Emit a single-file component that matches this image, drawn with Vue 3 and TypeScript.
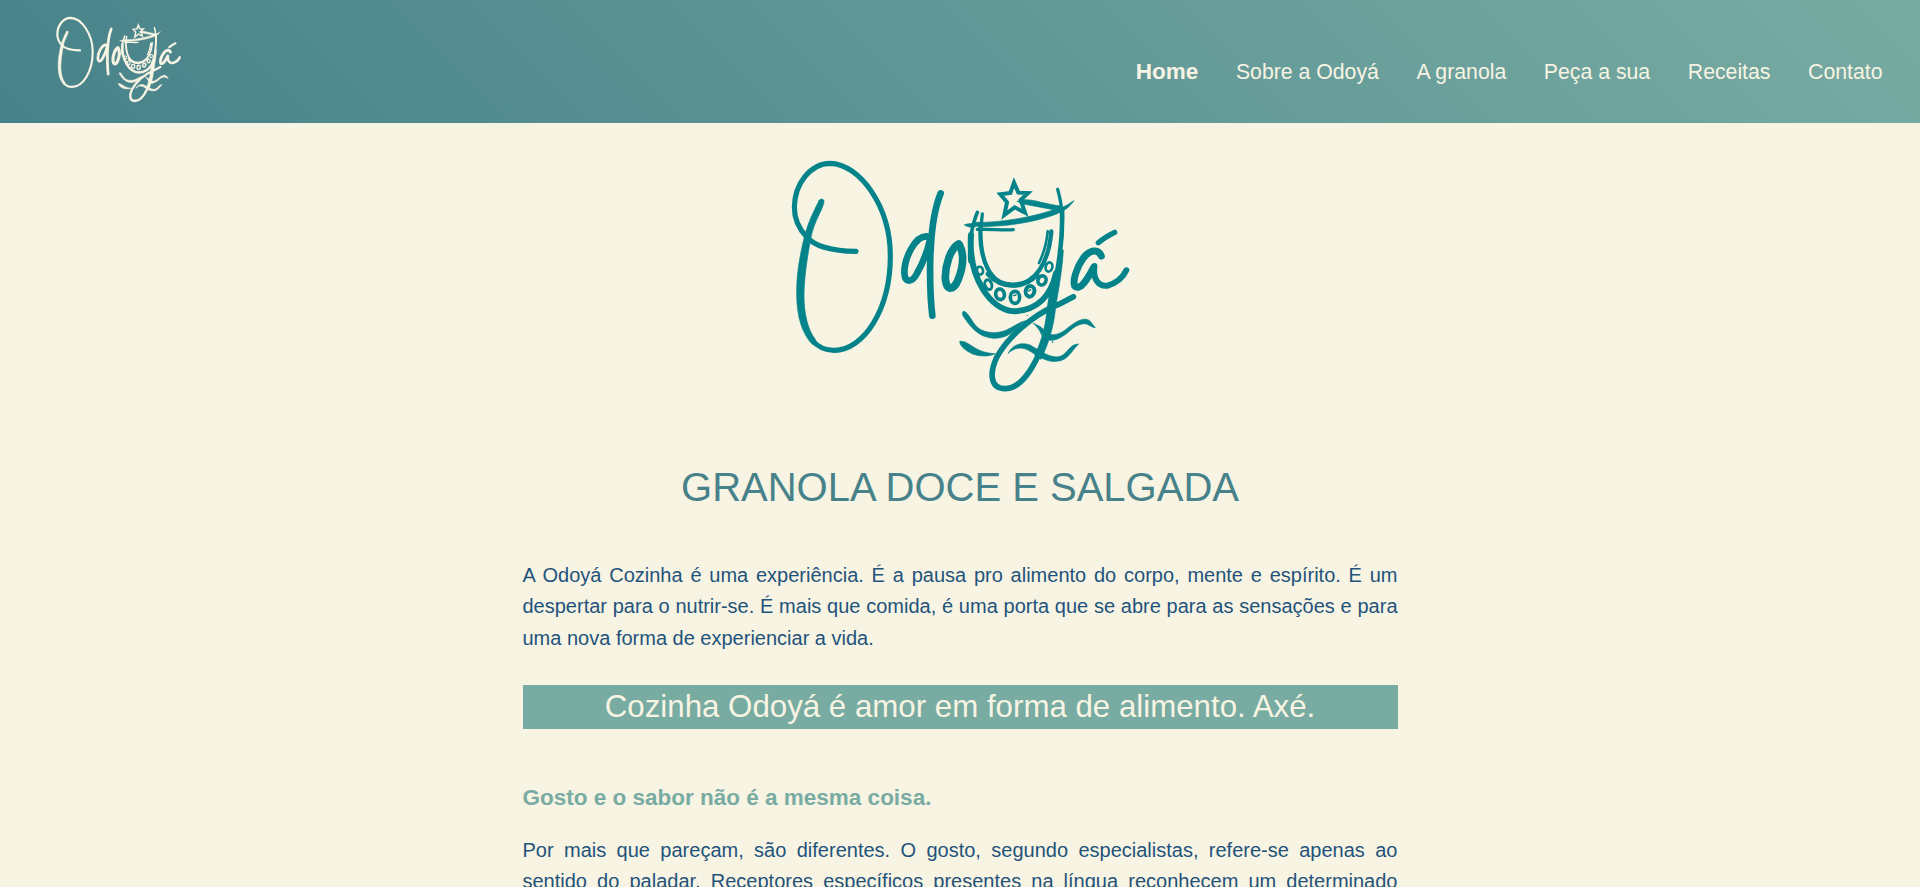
<script setup lang="ts">
import { defineComponent, h } from 'vue'

interface Stroke { d: string; w: number }
interface Bead { x: number; y: number; rx: number; ry: number; a: number; w: number }

const word: Stroke[] = [
  { d: 'M228 304C150 303 105 290 80 261C55 235 43 205 43 172C44 100 92 41 150 40C240 42 331 170 331 318C331 480 250 601 163 601C135 601 112 590 96 570', w: 14.5 },
  { d: 'M440 259C405 257 373 325 373 368C374 400 396 398 410 372C432 334 444 296 450 268', w: 19 },
  { d: 'M482 130C466 170 455 235 452 300', w: 19 },
  { d: 'M452 280C449 360 450 440 457 497', w: 19 },
]

const wordFill = 'M117 152C120 145 131 146 132 153C132 160 127 175 118 192C105 220 98 238 93 262C82 320 73 380 72 430C71 490 84 540 106 568L98 584C66 552 50 500 50 430C49 375 60 310 76 250C86 213 102 182 117 152Z'

const emblem: Stroke[] = [
  { d: 'M56 252C30 266 15 320 16 356C20 396 42 390 54 360C68 325 74 284 58 254', w: 22 },
  { d: 'M112 157C94 200 86 258 90 305', w: 10 },
  { d: 'M93 225C84 350 150 452 225 454C290 450 332 410 348 340', w: 17 },
  { d: 'M127 162L123 200', w: 9 },
  { d: 'M122 192C116 300 150 376 220 376C285 374 326 310 334 214', w: 12 },
  { d: 'M145 342C185 386 250 386 290 345', w: 15 },
  { d: 'M323 214C320 252 308 286 297 309', w: 7 },
  { d: 'M112 208C150 206 185 212 220 209', w: 9 },
  { d: 'M353 88C362 120 365 140 366 165', w: 9 },
  { d: 'M366 150C369 230 360 290 349 350', w: 13 },
  { d: 'M338 380C333 470 318 540 293 590C265 650 230 686 195 686C149 686 149 637 170 592C205 530 275 470 340 440C365 430 385 418 400 410', w: 16 },
  { d: 'M475 248C490 235 508 225 524 217', w: 15 },
  { d: 'M484 288C474 264 449 270 430 294C408 325 398 362 404 378C420 394 442 358 461 322', w: 20 },
  { d: 'M463 318C458 360 477 381 503 377C530 369 550 350 559 331', w: 17 },
]

const washes: string[] = [
  'M360 270L370 270C367 335 353 400 346 450C340 505 325 552 303 598L284 586C306 540 316 500 321 450C326 405 336 375 344 345C350 320 356 300 360 270Z',
  'M74 195C82 189 90 194 108 187C180 189 290 170 355 144C378 141 390 128 402 122C392 136 377 151 358 158C310 180 210 202 110 199C94 204 82 201 74 195Z',
  'M232 124C245 116 270 118 300 126C325 132 345 136 362 138L361 151C330 149 295 140 266 135C250 133 240 130 232 124Z',
  'M68 456C72 450 80 456 94 478C108 502 122 516 160 518C205 518 220 492 257 482C230 500 215 534 163 535C115 533 90 500 68 466Z',
  'M60 544C74 542 86 552 104 563C125 576 145 580 166 581C145 591 118 589 98 582C80 574 64 562 60 550Z',
  'M318 522C345 528 362 522 384 503C412 481 435 470 450 483L466 503C452 502 445 490 432 491C410 493 396 507 382 519C355 540 337 544 318 539Z',
  'M205 579C218 554 243 545 270 555C300 571 330 595 356 590C382 586 386 552 416 552C395 570 386 602 350 604C315 607 290 585 264 570C240 560 225 563 205 579Z',
  'M280 490C291 496 302 498 312 510L305 526C300 510 290 500 280 490Z',
]

const beads: Bead[] = [
  { x: 120, y: 332, rx: 9, ry: 12, a: -15, w: 8 },
  { x: 145, y: 374, rx: 10, ry: 15, a: -20, w: 9 },
  { x: 180, y: 403, rx: 13, ry: 16, a: -12, w: 11 },
  { x: 225, y: 412, rx: 14, ry: 18, a: 0, w: 11 },
  { x: 270, y: 394, rx: 13, ry: 16, a: 14, w: 12 },
  { x: 306, y: 361, rx: 12, ry: 14, a: 25, w: 11 },
  { x: 327, y: 321, rx: 10, ry: 14, a: 15, w: 8 },
]

const BrandMark = defineComponent({
  name: 'BrandMark',
  props: { weight: { type: Number, default: 0 } },
  setup: (props) => () =>
    h('svg', { viewBox: '0 0 1080 750', fill: 'none', stroke: 'currentColor', 'stroke-linecap': 'round', 'stroke-linejoin': 'round', role: 'img', 'aria-label': 'Odoyá' }, [
      h('g', [
        ...word.map(s => h('path', { d: s.d, 'stroke-width': s.w + props.weight })),
        h('path', { d: wordFill, fill: 'currentColor', 'stroke-width': 1 + props.weight })
      ]),
      h('g', { transform: 'translate(480 30)' }, [
        ...emblem.map(s => h('path', { d: s.d, 'stroke-width': s.w + props.weight })),
        ...washes.map(d => h('path', { d, fill: 'currentColor', 'stroke-width': 1 + props.weight })),
        h('path', { d: 'M222 68L235 98L264 99L242 120L255 158L224 142L193 165L201 127L181 103L211 99Z', 'stroke-width': 12, 'stroke-linejoin': 'miter' }),
        ...beads.map(b => h('ellipse', { cx: b.x, cy: b.y, rx: b.rx, ry: b.ry, 'stroke-width': b.w, transform: `rotate(${b.a} ${b.x} ${b.y})` })),
        h('path', { d: 'M221 407L228 405M266 393L272 389M281 469L281 470M337 546L338 546M262 466L262 466', 'stroke-width': 4 }),
      ]),
    ]),
})

const links: string[] = ['Home', 'Sobre a Odoyá', 'A granola', 'Peça a sua', 'Receitas', 'Contato']
</script>

<template>
  <div class="page">
    <header class="topbar">
      <BrandMark class="mark-small" :weight="3" />
      <nav class="menu">
        <a v-for="(link, i) in links" :key="link" class="menu-link" :class="{ active: i === 0 }">{{ link }}</a>
      </nav>
    </header>
    <main class="content">
      <BrandMark class="mark-large" :weight="1" />
      <h1 class="title">GRANOLA DOCE E SALGADA</h1>
      <p class="text">A Odoyá Cozinha é uma experiência. É a pausa pro alimento do corpo, mente e espírito. É um despertar para o nutrir-se. É mais que comida, é uma porta que se abre para as sensações e para uma nova forma de experienciar a vida.</p>
      <p class="band">Cozinha Odoyá é amor em forma de alimento. Axé.</p>
      <h2 class="subtitle">Gosto e o sabor não é a mesma coisa.</h2>
      <p class="text last">Por mais que pareçam, são diferentes. O gosto, segundo especialistas, refere-se apenas ao sentido do paladar. Receptores específicos presentes na língua reconhecem um determinado</p>
    </main>
  </div>
</template>

<style>
body {
  margin: 0;
  background: #f8f4e3;
}
</style>

<style scoped>
.page {
  height: 887px;
  overflow: hidden;
  background: #f8f4e3;
  font-family: "Liberation Sans", Arial, sans-serif;
}
.topbar {
  display: flex;
  justify-content: space-between;
  height: 123px;
  box-sizing: border-box;
  padding: 13px 37.5px 0 52.3px;
  background: linear-gradient(45deg, #47828a, #78aba2);
  color: #f8f4e3;
}
.mark-small {
  width: 132.8px;
  height: 92.2px;
}
.menu {
  display: flex;
  align-items: baseline;
  gap: 37.6px;
  height: 26px;
  margin-top: 46px;
  line-height: 26px;
}
.menu-link {
  font-size: 21.25px;
}
.menu-link.active {
  font-size: 22.5px;
  font-weight: 700;
}
.content {
  display: flex;
  flex-direction: column;
  width: 875px;
  margin: 0 auto;
  padding-top: 27px;
}
.mark-large {
  width: 360px;
  height: 250px;
  margin-left: 257px;
  color: #04838a;
}
.title {
  margin: 64px 0 0;
  font-size: 40px;
  font-weight: 400;
  line-height: 46px;
  text-align: center;
  color: #47828a;
}
.text {
  margin: 50px 0 0;
  font-size: 20px;
  line-height: 31.25px;
  text-align: justify;
  color: #1f537b;
}
.band {
  margin: 31.25px 0 0;
  font-size: 31.25px;
  line-height: 44px;
  text-align: center;
  background: #78aba2;
  color: #f8f4e3;
}
.subtitle {
  margin: 55px 0 0;
  font-size: 22.5px;
  line-height: 27px;
  color: #78aba2;
}
.last {
  margin-top: 24px;
  text-align-last: justify;
}
</style>
